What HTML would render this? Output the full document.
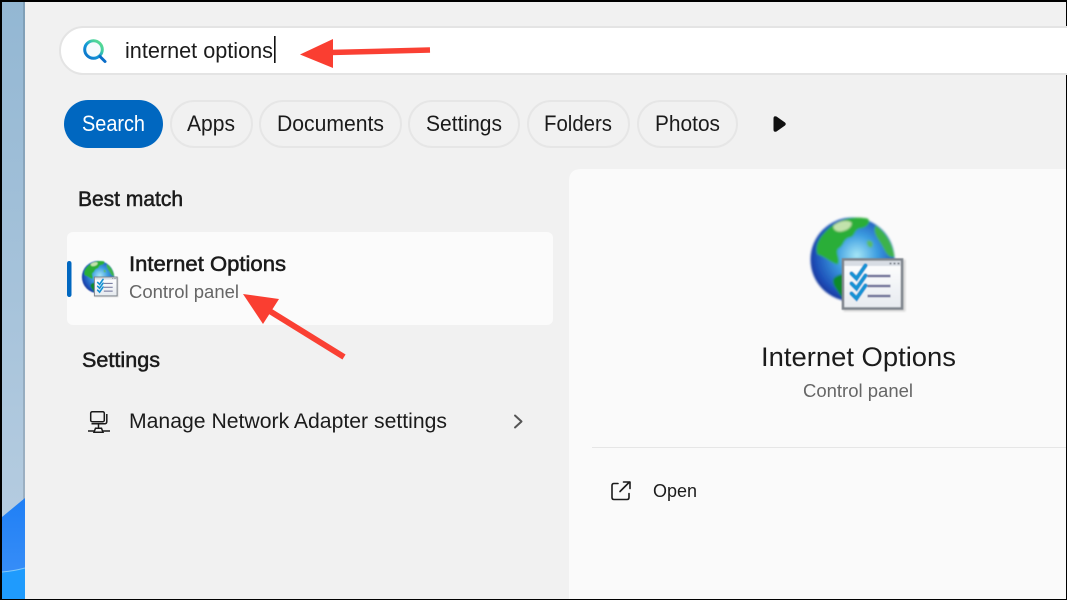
<!DOCTYPE html>
<html lang="en"><head><meta charset="utf-8"><title>Search</title>
<style>
html,body{margin:0;padding:0;background:#000;width:1067px;height:600px;overflow:hidden}
svg{display:block}
text{font-family:"Liberation Sans",sans-serif;fill:#1b1b1b;font-size:22px}
</style></head><body>
<svg width="1067" height="600" viewBox="0 0 1067 600" xmlns="http://www.w3.org/2000/svg">
<defs>
<linearGradient id="wall" x1="0" y1="0" x2="0" y2="1"><stop offset="0" stop-color="#93b7d3"/><stop offset="1" stop-color="#bacfe2"/></linearGradient>
<linearGradient id="wb" x1="0" y1="0" x2="0" y2="1"><stop offset="0" stop-color="#1f7ff5"/><stop offset="1" stop-color="#3f92f8"/></linearGradient>
<linearGradient id="mag" x1="1" y1="0" x2="0" y2="1"><stop offset="0" stop-color="#62e08a"/><stop offset=".28" stop-color="#45cfa0"/><stop offset=".55" stop-color="#129ad8"/><stop offset="1" stop-color="#0a6cc8"/></linearGradient>
<radialGradient id="sea" cx=".55" cy=".45" r=".62"><stop offset="0" stop-color="#a5e6f6"/><stop offset=".4" stop-color="#3b9ce0"/><stop offset=".8" stop-color="#1d4fb8"/><stop offset="1" stop-color="#13268c"/></radialGradient>
<linearGradient id="doc" x1="0" y1="0" x2="0" y2="1"><stop offset="0" stop-color="#ffffff"/><stop offset="1" stop-color="#e6eaef"/></linearGradient>
<filter id="bl" x="-20%" y="-20%" width="140%" height="140%"><feGaussianBlur stdDeviation="1.100"/></filter>
<filter id="bl2" x="-10%" y="-10%" width="120%" height="120%"><feGaussianBlur stdDeviation=".55"/></filter>
<g id="globe">
<g filter="url(#bl)">
<circle cx="43" cy="43" r="42" fill="url(#sea)"/>
<path d="M16 15C26 4 42-1 58 2C63 6 56 12 50 12C44 14 46 20 40 21C33 23 35 29 29 32C25 36 32 43 28 48C21 46 15 40 8 38C5 30 9 22 16 15Z" fill="#2aae38"/>
<path d="M24 9C30 4 38 3 42 6C43 11 36 15 30 15C26 15 23 12 24 9Z" fill="#c2e2ac"/>
<path d="M24 62C30 56 41 56 47 62C53 66 51 76 46 81C40 85 33 83 29 76C27 72 22 68 24 62Z" fill="#0c8a2a"/>
<path d="M66 9C76 15 83 27 85 40C80 43 76 36 73 30C70 24 62 16 66 9Z" fill="#3cb24c"/>
<path d="M58 24C63 23 65 28 62 31C59 32 56 27 58 24Z" fill="#58bb66"/>
</g>
<rect x="34" y="43" width="62" height="52" fill="#000" opacity=".14" filter="url(#bl)"/>
<g filter="url(#bl2)">
<rect x="33.500" y="43" width="59" height="49" fill="url(#doc)" stroke="#7f858d" stroke-width="2.600"/>
<rect x="35" y="44.500" width="56" height="5" fill="#d8dde4"/>
<path d="M80 47h2m2 0h2m2 0h2" stroke="#5f6772" stroke-width="1.500"/>
<g fill="none" stroke-linecap="round">
<path d="M42 57l5 5 9-13M42 67l5 5 9-13M42 77l5 5 9-13" stroke="#1793d4" stroke-width="4.200"/>
<path d="M58 59.500h23M58 69.500h23M58 79.500h23" stroke="#6e7198" stroke-width="2.600" stroke-linecap="butt"/>
</g>
</g>
</g>
</defs>

<rect width="1067" height="600" fill="#000"/>
<rect x="2" y="2" width="23" height="597" fill="url(#wall)"/>
<rect x="23" y="2" width="2" height="597" fill="#000" opacity=".13"/>
<path d="M2 517L25 498V599H2Z" fill="url(#wb)"/>
<path d="M2 572Q14 571 25 568V599H2Z" fill="#1f9bfd"/>
<path d="M2 572Q14 571 25 568" stroke="#7fc8fb" stroke-width="1" fill="none"/>

<rect x="25" y="2" width="1041" height="597" fill="#f1f1f1"/>

<rect x="60" y="27" width="1060" height="47" rx="23.500" fill="#fff" stroke="#e4e4e4" stroke-width="2"/>
<g fill="none">
<circle cx="93.500" cy="49.500" r="8.800" fill="#f6fbfd" stroke="url(#mag)" stroke-width="3"/>
<path d="M100 56.500L105 61.500" stroke="#0a6cc8" stroke-width="3" stroke-linecap="round"/>
</g>
<text x="125" y="58" textLength="148" lengthAdjust="spacingAndGlyphs">internet options</text>
<rect x="274" y="36" width="1.600" height="27" fill="#111"/>

<rect x="64" y="100" width="99" height="48" rx="24" fill="#0067c0"/>
<text x="82" y="131" textLength="63" lengthAdjust="spacingAndGlyphs" style="fill:#fff">Search</text>
<g fill="none" stroke="#e6e6e6" stroke-width="2">
<rect x="171" y="101" width="81" height="46" rx="23"/>
<rect x="260" y="101" width="141" height="46" rx="23"/>
<rect x="409" y="101" width="110" height="46" rx="23"/>
<rect x="528" y="101" width="101" height="46" rx="23"/>
<rect x="638" y="101" width="99" height="46" rx="23"/>
</g>
<text x="187" y="131" textLength="48" lengthAdjust="spacingAndGlyphs">Apps</text>
<text x="277" y="131" textLength="107" lengthAdjust="spacingAndGlyphs">Documents</text>
<text x="426" y="131" textLength="76" lengthAdjust="spacingAndGlyphs">Settings</text>
<text x="544" y="131" textLength="68" lengthAdjust="spacingAndGlyphs">Folders</text>
<text x="655" y="131" textLength="65" lengthAdjust="spacingAndGlyphs">Photos</text>
<path d="M773.500 118.500Q773.500 115.500 776.500 116.500L785 122.500Q786.500 124 785 125.500L776.500 131.500Q773.500 132.500 773.500 129.500Z" fill="#111"/>

<text x="78" y="206" textLength="105" lengthAdjust="spacingAndGlyphs" style="font-size:21px;stroke:#1b1b1b;stroke-width:.5">Best match</text>

<rect x="67" y="232" width="486" height="93" rx="6" fill="#fbfbfb"/>
<rect x="67" y="261" width="4.500" height="36" rx="2.200" fill="#0067c0"/>
<use href="#globe" transform="translate(81.500 260.500) scale(.385)"/>
<text x="129" y="271" textLength="157" lengthAdjust="spacingAndGlyphs" style="font-size:21px;stroke:#1b1b1b;stroke-width:.55">Internet Options</text>
<text x="129" y="298" textLength="110" lengthAdjust="spacingAndGlyphs" style="font-size:18px;fill:#666">Control panel</text>

<text x="82" y="367" textLength="78" lengthAdjust="spacingAndGlyphs" style="font-size:21px;stroke:#1b1b1b;stroke-width:.5">Settings</text>

<g fill="none" stroke="#1b1b1b" stroke-width="1.500">
<rect x="90.700" y="411.700" width="13.600" height="10" rx="1.500"/>
<path d="M106.800 414V421.500Q106.800 423.800 104.500 423.800H91.500"/>
<path d="M98.500 424V428"/>
<path d="M94 432.200L95.500 428.200H101.500L103 432.200Z"/>
<path d="M88 431H94M103 431H110"/>
</g>
<text x="129" y="428" textLength="318" lengthAdjust="spacingAndGlyphs" style="font-size:21px">Manage Network Adapter settings</text>
<path d="M515 415.500L521.500 421.500L515 427.500" fill="none" stroke="#555" stroke-width="2" stroke-linecap="round" stroke-linejoin="round"/>

<path d="M569 600V181Q569 169 581 169H1066V599H569Z" fill="#fafafa"/>
<use href="#globe" transform="translate(809.500 216.500)"/>
<text x="761" y="366" textLength="195" lengthAdjust="spacingAndGlyphs" style="font-size:27px">Internet Options</text>
<text x="803" y="397" textLength="110" lengthAdjust="spacingAndGlyphs" style="font-size:18px;fill:#666">Control panel</text>
<rect x="592" y="447" width="474" height="1" fill="#e6e6e6"/>
<g fill="none" stroke="#1b1b1b" stroke-width="1.600" stroke-linecap="round" stroke-linejoin="round">
<path d="M618 483.500H614Q612 483.500 612 485.500V497.500Q612 499.500 614 499.500H627Q629 499.500 629 497.500V493.500"/>
<path d="M620 491.500L629.500 482M623.500 482H630V488.500"/>
</g>
<text x="653" y="497" textLength="44" lengthAdjust="spacingAndGlyphs" style="font-size:18px">Open</text>

<path d="M430 50L330 52.500" stroke="#fa4033" stroke-width="5.500"/>
<path d="M300 54.500L333 39V68Z" fill="#fa3e31"/>
<path d="M344 357L268 310" stroke="#fa4033" stroke-width="6"/>
<path d="M243 294L279 299L263 324Z" fill="#fa3e31"/>
</svg>
</body></html>
